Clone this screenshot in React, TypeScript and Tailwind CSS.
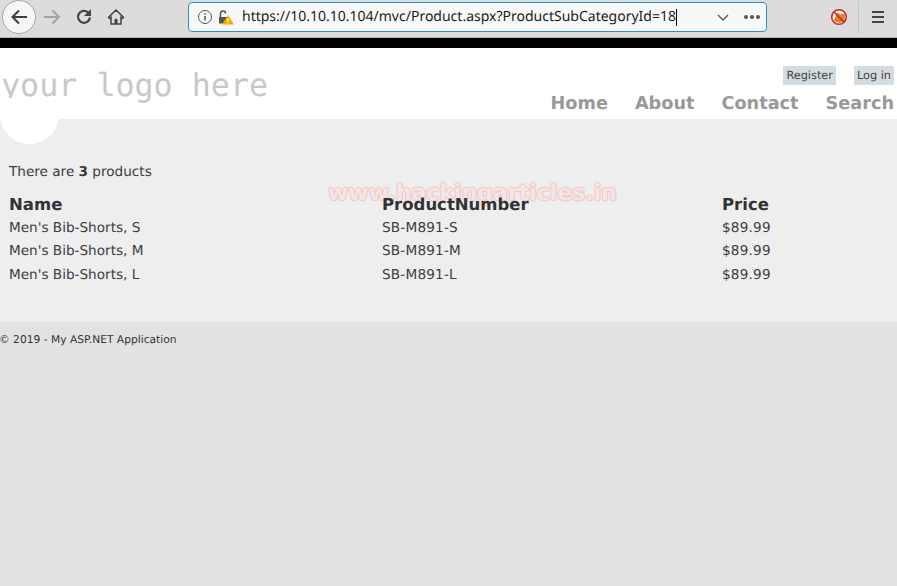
const sans = "font-['DejaVu_Sans',sans-serif]";

const products = [
  { name: "Men's Bib-Shorts, S", number: "SB-M891-S", price: "$89.99" },
  { name: "Men's Bib-Shorts, M", number: "SB-M891-M", price: "$89.99" },
  { name: "Men's Bib-Shorts, L", number: "SB-M891-L", price: "$89.99" },
];

function Toolbar() {
  return (
    <div className="box-border flex h-[38px] items-center border-b border-[#b4b4b4] bg-[#dcdcdc] pb-[3px]">
      <div className="ml-[2px] flex h-[34px] w-[34px] items-center justify-center rounded-full border border-[#a8a8a8] bg-[#f6f6f6]">
        <svg width="18" height="18" viewBox="0 0 18 18" fill="none" stroke="#3d3d3d" strokeWidth="2">
          <path d="M17 9H2.500M9 2.500 2.500 9 9 15.500" />
        </svg>
      </div>
      <svg className="ml-[7px]" width="18" height="18" viewBox="0 0 18 18" fill="none" stroke="#a3a3a3" strokeWidth="2">
        <path d="M1 9h15M9.500 2.500 16 9l-6.500 6.500" />
      </svg>
      <svg className="ml-[14px]" width="18" height="18" viewBox="0 0 18 18" fill="none" stroke="#444" strokeWidth="2.200">
        <path d="M15 9.500a6 6 0 1 1-2-5.200L15 6" />
        <path d="M16 1v7H9z" fill="#444" strokeWidth="0" />
      </svg>
      <svg className="ml-[14px]" width="18" height="18" viewBox="0 0 18 18" fill="none">
        <path d="M9 2 1.500 9.300 2.700 10.500 4 9.300V16h10V9.300l1.300 1.200 1.200-1.200z" stroke="#444" strokeWidth="1.500" />
        <path d="M7.500 16v-4a1.500 1.500 0 0 1 3 0V16z" fill="#444" />
      </svg>
      <div className="ml-[63px] flex h-[30px] w-[579px] items-center rounded-[4px] border border-[#2a90d0] bg-[#f8f8f8]">
        <svg className="ml-[8px]" width="16" height="16" viewBox="0 0 16 16" fill="none" stroke="#555" strokeWidth="1">
          <circle cx="8" cy="8" r="6.500" />
          <path d="M8 7v4.500M8 4.300v1.400" strokeWidth="1.500" />
        </svg>
        <svg className="ml-[5px]" width="16" height="16" viewBox="0 0 16 16">
          <path d="M1 8h8v6.500H1z" fill="#555" />
          <path d="M2.500 8V4.500a2.500 2.500 0 0 1 5 0" fill="none" stroke="#555" strokeWidth="1.500" />
          <path d="M10 6 16 15.500H4z" fill="#f5a800" />
          <path d="M10 9.500v3M10 13.500v1" stroke="#fff" strokeWidth="1.200" />
        </svg>
        <span className="ml-[8px] font-['Noto_Sans',sans-serif] text-[14px] leading-none whitespace-nowrap text-[#1c1c1c]">
          https://10.10.10.104/mvc/Product.aspx?ProductSubCategoryId=18
        </span>
        <span className="h-[17px] w-px bg-black" />
        <svg className="ml-auto" width="14" height="14" viewBox="0 0 14 14" fill="none" stroke="#555" strokeWidth="1.300">
          <path d="M2 5 7 10l5-5" />
        </svg>
        <svg className="mr-[5px] ml-[13px]" width="18" height="6" viewBox="0 0 18 6" fill="#555">
          <circle cx="3" cy="3" r="2" />
          <circle cx="9" cy="3" r="2" />
          <circle cx="15" cy="3" r="2" />
        </svg>
      </div>
      <svg className="ml-[63px]" width="18" height="18" viewBox="0 0 18 18" fill="none">
        <circle cx="9" cy="9" r="7" fill="#f2f2f2" />
        <path d="M3.500 13 7.500 4.500l3 2 4-1 .5 7-5 2.500z" fill="#d9822b" />
        <circle cx="9" cy="9" r="7.300" stroke="#d42020" strokeWidth="1.500" />
        <path d="M4 4l10 10" stroke="#d42020" strokeWidth="1.500" />
      </svg>
      <div className="ml-[10px] h-[32px] w-px bg-[#c4c4c4]" />
      <div className="ml-[13px] flex w-[12px] flex-col gap-[3px]">
        <div className="h-[2px] bg-[#444]" />
        <div className="h-[2px] bg-[#444]" />
        <div className="h-[2px] bg-[#444]" />
      </div>
    </div>
  );
}

function Header() {
  return (
    <header className="relative h-[71px] bg-white">
      <div className="flex items-start justify-between">
        <p className="mt-[20px] ml-[1px] font-['DejaVu_Sans_Mono',monospace] text-[31.700px] leading-[36px] text-[#c8c8c8]">your logo here</p>
        <div className="mr-[3px] flex flex-col items-end">
          <div className="mt-[18px] flex gap-[18px] text-[11.300px] leading-[18px] text-[#444]">
            <a className="bg-[#d3dce0] px-[3px] pt-px">Register</a>
            <a className="bg-[#d3dce0] px-[3px] pt-px">Log in</a>
          </div>
          <nav className="mt-[7px] flex gap-[27px] text-[17.700px] leading-[24px] font-bold text-[#999]">
            <a>Home</a>
            <a>About</a>
            <a>Contact</a>
            <a>Search</a>
          </nav>
        </div>
      </div>
      <div className="absolute top-[50px] left-0 h-[46px] w-[59px] rounded-b-full bg-white" />
    </header>
  );
}

export default function App() {
  return (
    <div className={`relative h-[586px] w-[897px] overflow-hidden bg-[#e2e2e2] [text-rendering:geometricPrecision] ${sans}`}>
      <Toolbar />
      <div className="h-[10px] bg-black" />
      <Header />
      <main className="h-[203px] bg-[#eeeeee] px-[9px] pt-[44px] text-[13.600px] text-[#3c3c3c]">
        <p className="leading-[18px]">
          There are <b>3</b> products
        </p>
        <table className="relative z-10 mt-[13px] w-[810px] table-fixed border-collapse">
          <thead>
            <tr className="h-[22px] text-left text-[16.500px] leading-[20px] font-bold text-[#333]">
              <th className="w-[373px] p-0">Name</th>
              <th className="w-[340px] p-0">ProductNumber</th>
              <th className="p-0">Price</th>
            </tr>
          </thead>
          <tbody>
            {products.map((p) => (
              <tr key={p.number} className="h-[23.500px]">
                <td className="p-0">{p.name}</td>
                <td className="p-0 tracking-[0.2px]">{p.number}</td>
                <td className="p-0 tracking-[0.2px]">{p.price}</td>
              </tr>
            ))}
          </tbody>
        </table>
      </main>
      <footer className="-ml-px pt-[11px] text-[10.700px] leading-[14px] text-[#333]">© 2019 - My ASP.NET Application</footer>
      <div className="absolute top-[179px] left-[328px] text-[22px] leading-[30px] font-bold whitespace-nowrap text-[#f3e6e6] [text-shadow:1px_0_1px_#f4c4c4,-1px_0_1px_#f4c4c4,0_1px_1px_#f4c4c4,0_-1px_1px_#f4c4c4]">
        www.hackingarticles.in
      </div>
    </div>
  );
}
